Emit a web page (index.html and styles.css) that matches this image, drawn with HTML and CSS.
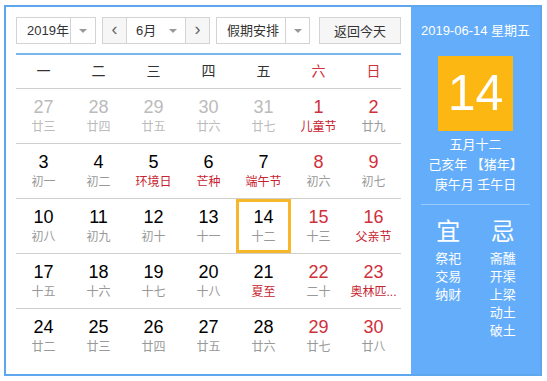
FILE: index.html
```html
<!DOCTYPE html>
<html lang="zh-CN">
<head>
    <meta charset="UTF-8">
    <meta name="viewport" content="width=device-width, initial-scale=1.0">
    <title>万年历</title>
    <link rel="stylesheet" href="styles.css">
</head>
<body>
    <div class="calendar">
        <div class="main">
            <div class="toolbar">
                <div class="select year-select">
                    <span class="select-text">2019年</span>
                    <span class="select-arrow"></span>
                </div>
                <div class="month-group">
                    <span class="nav-btn">&lsaquo;</span>
                    <div class="month-select">
                        <span class="select-text">6月</span>
                        <span class="select-arrow"></span>
                    </div>
                    <span class="nav-btn">&rsaquo;</span>
                </div>
                <div class="select holiday-select">
                    <span class="select-text">假期安排</span>
                    <span class="select-arrow"></span>
                </div>
                <button class="today-btn">返回今天</button>
            </div>

            <div class="week-head">
                <span>一</span><span>二</span><span>三</span><span>四</span><span>五</span>
                <span class="weekend">六</span><span class="weekend">日</span>
            </div>

            <div class="days">
                <div class="day other"><b>27</b><i>廿三</i></div>
                <div class="day other"><b>28</b><i>廿四</i></div>
                <div class="day other"><b>29</b><i>廿五</i></div>
                <div class="day other"><b>30</b><i>廿六</i></div>
                <div class="day other"><b>31</b><i>廿七</i></div>
                <div class="day weekend"><b>1</b><i class="fest">儿童节</i></div>
                <div class="day weekend"><b>2</b><i>廿九</i></div>

                <div class="day"><b>3</b><i>初一</i></div>
                <div class="day"><b>4</b><i>初二</i></div>
                <div class="day"><b>5</b><i class="fest">环境日</i></div>
                <div class="day"><b>6</b><i class="fest">芒种</i></div>
                <div class="day"><b>7</b><i class="fest">端午节</i></div>
                <div class="day weekend"><b>8</b><i>初六</i></div>
                <div class="day weekend"><b>9</b><i>初七</i></div>

                <div class="day"><b>10</b><i>初八</i></div>
                <div class="day"><b>11</b><i>初九</i></div>
                <div class="day"><b>12</b><i>初十</i></div>
                <div class="day"><b>13</b><i>十一</i></div>
                <div class="day today"><b>14</b><i>十二</i></div>
                <div class="day weekend"><b>15</b><i>十三</i></div>
                <div class="day weekend"><b>16</b><i class="fest">父亲节</i></div>

                <div class="day"><b>17</b><i>十五</i></div>
                <div class="day"><b>18</b><i>十六</i></div>
                <div class="day"><b>19</b><i>十七</i></div>
                <div class="day"><b>20</b><i>十八</i></div>
                <div class="day"><b>21</b><i class="fest">夏至</i></div>
                <div class="day weekend"><b>22</b><i>二十</i></div>
                <div class="day weekend"><b>23</b><i class="fest">奥林匹...</i></div>

                <div class="day last"><b>24</b><i>廿二</i></div>
                <div class="day last"><b>25</b><i>廿三</i></div>
                <div class="day last"><b>26</b><i>廿四</i></div>
                <div class="day last"><b>27</b><i>廿五</i></div>
                <div class="day last"><b>28</b><i>廿六</i></div>
                <div class="day last weekend"><b>29</b><i>廿七</i></div>
                <div class="day last weekend"><b>30</b><i>廿八</i></div>
            </div>
        </div>

        <div class="side">
            <div class="side-date">2019-06-14 星期五</div>
            <div class="side-day">14</div>
            <div class="side-lunar">
                <p>五月十二</p>
                <p>己亥年 【猪年】</p>
                <p>庚午月 壬午日</p>
            </div>
            <div class="almanac">
                <div class="almanac-col">
                    <div class="almanac-title">宜</div>
                    <p>祭祀</p>
                    <p>交易</p>
                    <p>纳财</p>
                </div>
                <div class="almanac-col">
                    <div class="almanac-title">忌</div>
                    <p>斋醮</p>
                    <p>开渠</p>
                    <p>上梁</p>
                    <p>动土</p>
                    <p>破土</p>
                </div>
            </div>
        </div>
    </div>
</body>
</html>
```

FILE: styles.css
```css
body {
    margin: 0;
    padding: 5px 0 0 4px;
    font-family: "Liberation Sans", "Noto Sans CJK SC", sans-serif;
    background-color: #fff;
}
.calendar {
    display: flex;
    width: 534px;
    height: 367px;
    border: 2px solid #5ea6ee;
}
.main {
    width: 386px;
    padding: 10px 10px 0 10px;
}
.toolbar {
    display: flex;
    height: 27px;
    margin-bottom: 9px;
}
.select, .month-group, .today-btn {
    display: flex;
    box-sizing: border-box;
    height: 27px;
    border: 1px solid #d3d3d3;
    background-color: #fff;
    font-size: 13px;
    color: #333;
}
.select-text {
    flex: 1;
    line-height: 25px;
    padding-left: 10px;
}
.select-arrow {
    width: 24px;
    border-left: 1px solid #d3d3d3;
    position: relative;
}
.select-arrow::after {
    content: "";
    position: absolute;
    left: 8px;
    top: 11px;
    border-left: 4px solid transparent;
    border-right: 4px solid transparent;
    border-top: 4px solid #999;
}
.year-select {
    width: 80px;
}
.month-group {
    width: 108px;
    margin-left: 6px;
}
.nav-btn {
    width: 23px;
    text-align: center;
    background-color: #f6f6f6;
    color: #666;
    font-size: 18px;
    line-height: 23px;
}
.month-select {
    flex: 1;
    display: flex;
    border-left: 1px solid #d3d3d3;
    border-right: 1px solid #d3d3d3;
}
.month-select .select-text {
    padding-left: 9px;
}
.month-select .select-arrow {
    border-left: none;
}
.holiday-select {
    width: 94px;
    margin-left: 6px;
}
.holiday-select .select-arrow {
    width: 23px;
}
.today-btn {
    width: 82px;
    margin-left: 9px;
    justify-content: center;
    align-items: center;
    background-color: #f6f6f6;
    font-family: inherit;
    padding: 0;
}
.week-head {
    display: grid;
    grid-template-columns: repeat(7, 55px);
    height: 33px;
    border-top: 2px solid #7ab6ee;
    border-bottom: 1px solid #cfcfcf;
    font-size: 14px;
    color: #333;
}
.week-head span {
    text-align: center;
    line-height: 33px;
}
.week-head .weekend {
    color: #d0303a;
}
.days {
    display: grid;
    grid-template-columns: repeat(7, 55px);
    grid-auto-rows: 55px;
}
.day {
    box-sizing: border-box;
    border-bottom: 1px solid #cfcfcf;
    text-align: center;
    padding-top: 8px;
}
.day.last {
    border-bottom: none;
}
.day b {
    display: block;
    font-weight: normal;
    font-size: 18px;
    line-height: 21px;
    color: #000;
}
.day i {
    display: block;
    font-style: normal;
    font-size: 12px;
    line-height: 18px;
    color: #999;
}
.day.other b {
    color: #bbb;
}
.day.other i {
    color: #bbb;
}
.day.weekend b {
    color: #d0303a;
}
.day i.fest {
    color: #c7232f;
}
.day.today {
    box-shadow: inset 0 0 0 3px #f6b72a;
}
.side {
    width: 130px;
    padding: 0 10px;
    box-sizing: border-box;
    background-color: #63adfa;
    color: #fff;
    text-align: center;
}
.side-date {
    font-size: 13px;
    margin: 16px -10px 0;
    line-height: 16px;
    white-space: nowrap;
}
.side-day {
    width: 75px;
    height: 75px;
    margin: 17px auto 0;
    background-color: #fdb713;
    font-size: 50px;
    line-height: 75px;
}
.side-lunar {
    padding: 4px 0 9px;
    border-bottom: 1px solid #9acbfb;
    font-size: 13px;
}
.side-lunar p {
    margin: 0;
    line-height: 20px;
}
.almanac {
    display: flex;
    padding-top: 12px;
}
.almanac-col {
    flex: 1;
    font-size: 13px;
}
.almanac-title {
    font-size: 24px;
    line-height: 30px;
    margin-bottom: 3px;
}
.almanac-col p {
    margin: 0;
    line-height: 18px;
}
```
